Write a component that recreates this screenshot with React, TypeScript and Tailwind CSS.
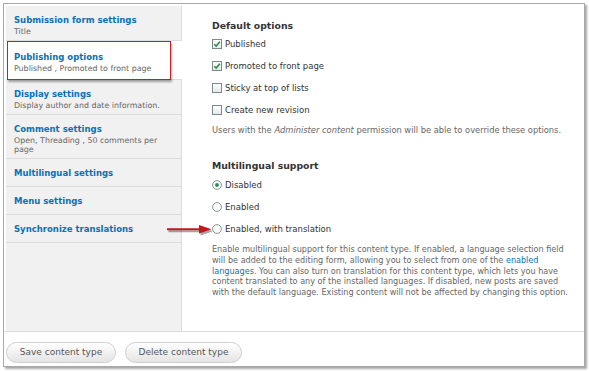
import React from 'react';

const tabs = [
  { title: 'Submission form settings', desc: ['Title'] },
  { title: 'Publishing options', desc: ['Published , Promoted to front page'], active: true },
  { title: 'Display settings', desc: ['Display author and date information.'] },
  { title: 'Comment settings', desc: ['Open, Threading , 50 comments per', 'page'] },
  { title: 'Multilingual settings', desc: [] },
  { title: 'Menu settings', desc: [] },
  { title: 'Synchronize translations', desc: [] },
];

function Checkbox({ checked }: { checked?: boolean }) {
  return (
    <svg width="10" height="10" viewBox="0 0 10 10" className="shrink-0">
      <defs>
        <linearGradient id="cbg" x1="0" y1="0" x2="0" y2="1">
          <stop offset="0" stopColor="#ffffff" />
          <stop offset="1" stopColor="#e4e8e8" />
        </linearGradient>
      </defs>
      <rect x="0.5" y="0.5" width="9" height="9" fill="url(#cbg)" stroke="#7d8a8c" />
      {checked && <path d="M2.3 5.2 L4.2 7.1 L7.8 2.8" fill="none" stroke="#2f8a46" strokeWidth="1.6" />}
    </svg>
  );
}

function Radio({ checked }: { checked?: boolean }) {
  return (
    <svg width="10" height="10" viewBox="0 0 10 10" className="shrink-0">
      <circle cx="5" cy="5" r="4.4" fill="#fbfbfb" stroke="#7d8a8c" strokeWidth="0.9" />
      {checked && <circle cx="5" cy="5" r="1.9" fill="#2f8a56" />}
    </svg>
  );
}

export default function App() {
  return (
    <div className="relative w-[589px] h-[371px] bg-white overflow-hidden" style={{ fontFamily: '"DejaVu Sans", Verdana, sans-serif' }}>
      <div className="absolute left-[3px] top-[3px] w-[582px] h-[364px] border border-[#a9a9a9] shadow-[2px_2px_2px_rgba(0,0,0,0.35)] flex flex-col">
        {/* Vertical tabs + panel */}
        <div className="flex h-[328px] pl-[2px] pt-[2px] pr-px border-b border-[#dcdcdc]">
          <ul className="w-[176px] bg-[#f1f1f1] border-r border-[#dcdcdc]">
            {tabs.map((t) => (
              <li
                key={t.title}
                className={
                  t.active
                    ? 'relative -mr-px bg-white px-[8px] pt-[10px] pb-[6px] border-b border-[#dcdcdc]'
                    : 'px-[8px] pt-[8px] border-b border-[#dcdcdc] ' + (t.desc.length ? 'pb-[3px]' : 'pb-[7px]')
                }
              >
                <div className="text-[8.5px] leading-[12px] font-bold text-[#0b70b5] whitespace-nowrap">{t.title}</div>
                {t.desc.length > 0 && (
                  <div className="mt-px text-[7.9px] leading-[9.5px] text-[#666]">
                    {t.desc.map((d) => (
                      <div key={d}>{d}</div>
                    ))}
                  </div>
                )}
              </li>
            ))}
          </ul>

          <div className="flex-1 pl-[30px] pr-[12px] pt-[14px] text-[#333]">
            <h3 className="text-[9.3px] leading-[12px] font-bold">Default options</h3>
            <div className="mt-[6px] flex flex-col gap-[10px] text-[8.5px] leading-[12px]">
              {[
                ['Published', true],
                ['Promoted to front page', true],
                ['Sticky at top of lists', false],
                ['Create new revision', false],
              ].map(([label, on]) => (
                <label key={label as string} className="flex items-center gap-[3px]">
                  <Checkbox checked={on as boolean} />
                  {label}
                </label>
              ))}
            </div>
            <p className="mt-[8px] text-[8.3px] leading-[12px] text-[#666] whitespace-nowrap">
              Users with the <em>Administer content</em> permission will be able to override these options.
            </p>

            <h3 className="mt-[24px] text-[9.3px] leading-[12px] font-bold">Multilingual support</h3>
            <div className="mt-[7px] flex flex-col gap-[10px] text-[8.5px] leading-[12px]">
              {[
                ['Disabled', true],
                ['Enabled', false],
                ['Enabled, with translation', false],
              ].map(([label, on]) => (
                <label key={label as string} className="flex items-center gap-[3px]">
                  <Radio checked={on as boolean} />
                  {label}
                </label>
              ))}
            </div>
            <p className="mt-[9px] text-[8.1px] leading-[10.8px] text-[#666]">
              Enable multilingual support for this content type. If enabled, a language selection field will be added to the editing form, allowing you to select from one of the <span className="text-[#0b70b5]">enabled languages</span>. You can also turn on translation for this content type, which lets you have content translated to any of the installed languages. If disabled, new posts are saved with the default language. Existing content will not be affected by changing this option.
            </p>
          </div>
        </div>

        {/* Buttons */}
        <div className="flex gap-[9px] pl-[2px] pt-[10px]">
          <button className="h-[21px] w-[110px] rounded-full border border-[#cfcfcf] bg-gradient-to-b from-white to-[#e4e4e4] text-[9px] text-[#555]">
            Save content type
          </button>
          <button className="h-[21px] w-[117px] rounded-full border border-[#cfcfcf] bg-gradient-to-b from-white to-[#e4e4e4] text-[9px] text-[#555]">
            Delete content type
          </button>
        </div>
      </div>

      {/* Annotation: red box around active tab */}
      <div className="absolute left-[7px] top-[41px] w-[164px] h-[39px] border-[1.5px] border-[#b3262c] shadow-[1px_2px_2px_rgba(0,0,0,0.35)]" />

      {/* Annotation: red arrow */}
      <svg className="absolute left-[164px] top-[222px]" width="52" height="16" viewBox="0 0 52 16">
        <g transform="translate(1.5,2)" opacity="0.35">
          <line x1="3" y1="7.3" x2="38" y2="7.3" stroke="#000" strokeWidth="2" />
          <path d="M35 3 L47.5 7.3 L35 11.6 Z" fill="#000" />
        </g>
        <line x1="3" y1="7.3" x2="38" y2="7.3" stroke="#c4161c" strokeWidth="2" />
        <path d="M35 3 L47.5 7.3 L35 11.6 Z" fill="#c4161c" />
      </svg>
    </div>
  );
}
